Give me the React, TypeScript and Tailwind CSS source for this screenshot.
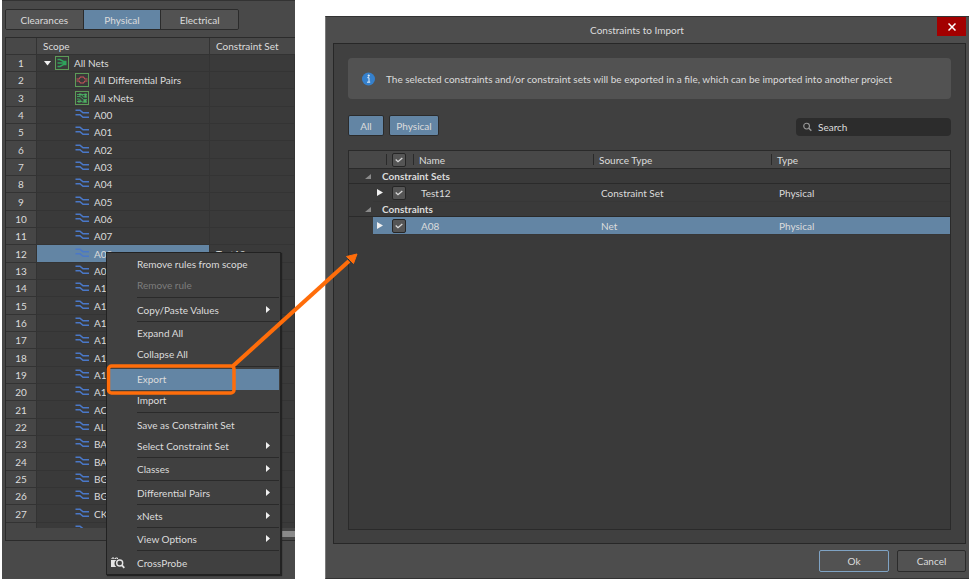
import React, { useState } from "react";
import clsx from "clsx";

const NETS = [
  "A00", "A01", "A02", "A03", "A04", "A05", "A06", "A07", "A08", "A09", "A10", "A11",
  "A12", "A13", "A14", "A15", "A16", "ACT", "ALERT", "BA0", "BA1", "BG0", "BG1", "CK", "CKE",
];

type MenuEntry = { label: string; submenu?: boolean; disabled?: boolean; active?: boolean; icon?: boolean };

const MENU: { gap: string; items: MenuEntry[] }[] = [
  { gap: "", items: [{ label: "Remove rules from scope" }, { label: "Remove rule", disabled: true }] },
  { gap: "mt-px mb-[2px]", items: [{ label: "Copy/Paste Values", submenu: true }] },
  { gap: "mb-px", items: [{ label: "Expand All" }, { label: "Collapse All" }] },
  { gap: "mt-px mb-[2px]", items: [{ label: "Export", active: true }, { label: "Import" }] },
  { gap: "mt-px mb-[2px]", items: [{ label: "Save as Constraint Set" }, { label: "Select Constraint Set", submenu: true }] },
  { gap: "mb-px", items: [{ label: "Classes", submenu: true }] },
  { gap: "mb-[2px]", items: [{ label: "Differential Pairs", submenu: true }] },
  { gap: "mb-px", items: [{ label: "xNets", submenu: true }] },
  { gap: "mb-px", items: [{ label: "View Options", submenu: true }] },
  { gap: "mb-[2px]", items: [{ label: "CrossProbe", icon: true }] },
];

function NetIcon() {
  return (
    <svg width="14" height="12" viewBox="0 0 14 12" fill="none" stroke="#4a78c8" strokeWidth="1.600" aria-hidden="true">
      <path d="M0.500 1.200H5L8 3.800H14M0.500 5.700H5L8 8.300H14" />
    </svg>
  );
}

function AllNetsIcon() {
  return (
    <svg width="14" height="14" viewBox="0 0 14 14" fill="none" aria-hidden="true">
      <rect x="0.5" y="0.5" width="13" height="13" stroke="#5d9c58" />
      <path d="M2.5 3.5H5L8.5 5.5H11.5M2.5 7H11.5M2.5 10.5H5L8.5 8.5H11.5" stroke="#2fa35c" strokeWidth="1.6" />
    </svg>
  );
}

function DiffPairsIcon() {
  return (
    <svg width="14" height="14" viewBox="0 0 14 14" fill="none" aria-hidden="true">
      <rect x="0.5" y="0.5" width="13" height="13" stroke="#5d9c58" />
      <path d="M1.500 6H4L5.500 4H8.500L10 6H12.500M1.500 8H4L5.500 10H8.500L10 8H12.500" stroke="#c9555a" strokeWidth="1.100" />
    </svg>
  );
}

function XNetsIcon() {
  return (
    <svg width="14" height="14" viewBox="0 0 14 14" fill="none" aria-hidden="true">
      <rect x="0.5" y="0.5" width="13" height="13" stroke="#5d9c58" />
      <path d="M2 3.500H12M2 5.500H5L8.500 8.500H12M2 8H4.500L7 11H12M2 10.500H6M6.500 3.500L8.500 6H12" stroke="#3fa35c" />
      <path d="M4 2.500H6.500V4.500H4ZM9.500 2.500H11.500V6.500H9.500ZM8.500 9H11.500V11.500H8.500ZM3 9.500H5.500V11.500H3Z" fill="#4fae62" />
    </svg>
  );
}

function CrossProbeIcon() {
  return (
    <svg width="14" height="12" viewBox="0 0 14 12" fill="none" className="ml-px" aria-hidden="true">
      <path d="M0 3H5.2A4.4 4.4 0 0 0 5.2 10H0Z" fill="#e4e4e4" />
      <path d="M1 2V1H3V2M4.5 2V1H6.5V2" stroke="#e4e4e4" />
      <circle cx="8.7" cy="6" r="3" stroke="#e4e4e4" strokeWidth="1.4" />
      <path d="M10.8 8.2L13.3 10.8" stroke="#e4e4e4" strokeWidth="1.8" />
    </svg>
  );
}

function Arrow({ small }: { small?: boolean }) {
  return (
    <svg width={small ? 4 : 6} height="7" viewBox="0 0 6 7" preserveAspectRatio="none" aria-hidden="true">
      <path d="M0 0L6 3.500L0 7Z" fill="#f0f0f0" />
    </svg>
  );
}

const gridNum = "border-r border-b border-[#333333] bg-[#464646] p-0 text-center font-normal";
const gridCell = "border-r border-b border-[#343434] p-0";

function ScopeRow({ n, indent, icon, label, open, selected, set }: {
  n: number; indent?: boolean; icon: React.ReactNode; label: string; open?: boolean; selected?: boolean; set?: string;
}) {
  return (
    <tr className="h-[17px] nth-[3n]:h-[18px]">
      <th scope="row" className={gridNum}>{n < 28 ? n : ""}</th>
      <td className={clsx(gridCell, selected && "bg-[#6385a4]")}>
        <div className={clsx("flex h-4 items-center", indent ? "pl-[38px]" : "pl-[7px]")}>
          {open && (
            <svg width="7" height="5" viewBox="0 0 7 5" className="mr-1" aria-hidden="true">
              <path d="M0 0H7L3.500 4.500Z" fill="#f0f0f0" />
            </svg>
          )}
          {icon}
          <span className="pl-[5px] leading-4">{label}</span>
        </div>
      </td>
      <td className={clsx(gridCell, "pl-[6px]")}>{set}</td>
    </tr>
  );
}

function ConstraintPanel() {
  const tabs = ["Clearances", "Physical", "Electrical"];
  const [tab, setTab] = useState("Physical");
  return (
    <section className="relative flex w-[293px] shrink-0 flex-col border-t border-[#333333] bg-[#494949] pt-2 pb-[38px] pl-[3px]">
      <div role="tablist" className="flex h-[21px] w-[234px] shrink-0 overflow-hidden rounded-xs border border-[#2b2b2b]">
        {tabs.map((t) => (
          <button
            key={t}
            role="tab"
            aria-selected={t === tab}
            onClick={() => setTab(t)}
            className={clsx(
              "flex-1 border-r border-[#2b2b2b] last:border-r-0",
              t === tab ? "bg-[#6385a4]" : "bg-[#525252]",
            )}
          >
            {t}
          </button>
        ))}
      </div>
      <div className="mt-[7px] min-h-0 flex-1 overflow-hidden border-t border-l border-[#2b2b2b] bg-[#3a3a3a]">
        <table className="w-full table-fixed border-separate border-spacing-0">
          <colgroup>
            <col className="w-[31px]" />
            <col className="w-[173px]" />
            <col />
          </colgroup>
          <thead>
            <tr className="h-[17px] bg-[#484848] text-left">
              <th aria-label="Row" className="border-r border-b border-[#333333] p-0" />
              <th className="border-r border-b border-[#333333] p-0 pl-[6px] font-normal">Scope</th>
              <th className="border-b border-[#333333] p-0 pl-[6px] font-normal">Constraint Set</th>
            </tr>
          </thead>
          <tbody>
            <ScopeRow n={1} icon={<AllNetsIcon />} label="All Nets" open />
            <ScopeRow n={2} indent icon={<DiffPairsIcon />} label="All Differential Pairs" />
            <ScopeRow n={3} indent icon={<XNetsIcon />} label="All xNets" />
            {NETS.map((net, i) => (
              <ScopeRow
                key={net}
                n={i + 4}
                indent
                icon={<NetIcon />}
                label={i + 4 < 28 ? net : ""}
                selected={net === "A08"}
                set={net === "A08" ? "Test12" : undefined}
              />
            ))}
          </tbody>
        </table>
      </div>
      <div className="flex h-[13px] shrink-0 items-center justify-end border-b border-l border-[#2b2b2b] bg-[#464646]">
        <div className="h-[6px] w-20 bg-[#8a8a8a]" />
      </div>
      <ContextMenu />
    </section>
  );
}

function ContextMenu() {
  return (
    <div role="menu" className="absolute top-[251px] left-[104px] w-[175px] border border-[#222222] bg-[#404040] pt-px pr-px pl-[3px] shadow-[1px_1px_1px_#222222]">
      {MENU.map(({ gap, items }, g) => (
        <div key={g}>
          {g > 0 && <div className={clsx("ml-[27px] border-t border-[#2a2a2a]", gap)} />}
          {items.map((m) => (
            <button
              key={m.label}
              role="menuitem"
              disabled={m.disabled}
              className={clsx(
                "flex h-[21px] w-full items-center pr-[9px] pb-[2px] text-left",
                m.active && "bg-[#6385a4]",
                m.disabled && "text-[#7d7d7d]",
              )}
            >
              <span className="w-[27px] shrink-0">{m.icon && <CrossProbeIcon />}</span>
              <span className="flex-1">{m.label}</span>
              {m.submenu && <Arrow small />}
            </button>
          ))}
        </div>
      ))}
    </div>
  );
}

function Check({ label }: { label: string }) {
  return (
    <label className="grid size-[14px] place-items-center">
      <input
        type="checkbox"
        defaultChecked
        aria-label={label}
        className="peer col-start-1 row-start-1 size-[14px] appearance-none rounded-xs border border-[#262626] bg-[#555555]"
      />
      <svg width="8" height="6" viewBox="0 0 8 6" fill="none" className="pointer-events-none invisible col-start-1 row-start-1 peer-checked:visible" aria-hidden="true">
        <path d="M0.700 2.500L3 4.700L7.300 0.900" stroke="#d8d8d8" strokeWidth="1.300" />
      </svg>
    </label>
  );
}

function HeadCell({ children }: { children: React.ReactNode }) {
  return (
    <th className="border-b border-[#2a2a2a] p-0 font-normal">
      <div className="flex h-[11px] items-center border-l border-[#2a2a2a] pl-[5px]">{children}</div>
    </th>
  );
}

function GroupRow({ label }: { label: string }) {
  return (
    <tr className="h-[15px]">
      <th colSpan={6} scope="rowgroup" className="border-b border-[#2a2a2a] p-0 text-left font-bold">
        <div className="flex h-[14px] items-center pl-4">
          <svg width="6" height="5" viewBox="0 0 6 5" className="mr-[11px]" aria-hidden="true">
            <path d="M6 0V5H0Z" fill="#8a8a8a" />
          </svg>
          {label}
        </div>
      </th>
    </tr>
  );
}

function ItemRow({ name, source, selected }: { name: string; source: string; selected?: boolean }) {
  const cell = clsx("border-b border-[#373737] p-0", selected && "bg-[#6385a4]");
  return (
    <tr className="h-[18px]">
      <td className="p-0" />
      <td className={clsx(cell, "pl-1")}><Arrow /></td>
      <td className={clsx(cell, "pl-[6px]")}><Check label={`Select ${name}`} /></td>
      <td className={clsx(cell, "pl-2")}>{name}</td>
      <td className={clsx(cell, "pl-2")}>{source}</td>
      <td className={clsx(cell, "pl-2")}>Physical</td>
    </tr>
  );
}

function ImportDialog() {
  return (
    <section role="dialog" aria-labelledby="dialog-title" className="mt-4 flex min-w-0 flex-1 flex-col border-t border-b border-l border-[#333333] border-l-[#7a7a7a] bg-[#4d4d4d] pr-[3px] pl-[7px]">
      <header className="flex h-[26px] shrink-0 items-start">
        <h1 id="dialog-title" className="flex-1 pl-1 text-center leading-[26px]">Constraints to Import</h1>
        <button aria-label="Close" className="grid h-[19px] w-[29px] place-items-center bg-[#a30000]">
          <svg width="8" height="8" viewBox="0 0 8 8" stroke="#ffffff" strokeWidth="1.500" aria-hidden="true">
            <path d="M0.500 0.500L7.500 7.500M7.500 0.500L0.500 7.500" />
          </svg>
        </button>
      </header>
      <div className="flex min-h-0 flex-1 flex-col border border-[#272727] bg-[#404040] px-[14px] pt-[14px] pb-[13px]">
        <p className="flex h-[41px] shrink-0 items-center gap-[11px] rounded-sm bg-[#525252] pl-[14px]">
          <svg width="13" height="14" viewBox="0 0 13 14" aria-hidden="true">
            <circle cx="6.500" cy="7" r="6.500" fill="#3580cc" />
            <path d="M5.300 5.700H7V10M5 10.200H8.200M6.200 3H7.200V4.200H6.200Z" stroke="#e8f0f8" fill="none" />
          </svg>
          <span>The selected constraints and/or constraint sets will be exported in a file, which can be imported into another project</span>
        </p>
        <div className="mt-4 flex h-[21px] shrink-0 gap-[5px]">
          <button className="w-9 rounded-xs border border-[#2b2b2b] bg-[#6385a4]">All</button>
          <button className="w-[50px] rounded-xs border border-[#2b2b2b] bg-[#6385a4]">Physical</button>
          <label className="mt-[3px] ml-auto flex h-[18px] w-[155px] items-center gap-[6px] rounded-sm bg-[#2c2c2c] pl-[7px]">
            <svg width="10" height="10" viewBox="0 0 10 10" fill="none" stroke="#969696" aria-hidden="true">
              <circle cx="4" cy="4" r="3.200" strokeWidth="1.300" />
              <path d="M6.500 6.500L9.300 9.300" strokeWidth="1.600" />
            </svg>
            <input type="search" aria-label="Search" placeholder="Search" className="w-full min-w-0 bg-transparent outline-none placeholder:text-[#dcdcdc]" />
          </label>
        </div>
        <div className="mt-[14px] min-h-0 flex-1 overflow-hidden border border-[#2a2a2a] bg-[#3a3a3a]">
          <table className="w-full table-fixed border-separate border-spacing-0 text-left">
            <colgroup>
              <col className="w-6" />
              <col className="w-[13px]" />
              <col className="w-[27px]" />
              <col className="w-[180px]" />
              <col className="w-[178px]" />
              <col />
            </colgroup>
            <thead>
              <tr className="h-[18px] bg-[#484848]">
                <th colSpan={2} aria-label="Expand" className="border-b border-[#2a2a2a] p-0" />
                <HeadCell><Check label="Select all" /></HeadCell>
                <HeadCell>Name</HeadCell>
                <HeadCell>Source Type</HeadCell>
                <HeadCell>Type</HeadCell>
              </tr>
            </thead>
            <tbody>
              <GroupRow label="Constraint Sets" />
              <ItemRow name="Test12" source="Constraint Set" />
              <GroupRow label="Constraints" />
              <ItemRow name="A08" source="Net" selected />
            </tbody>
          </table>
        </div>
      </div>
      <footer className="flex h-[34px] shrink-0 items-center justify-end gap-2">
        <button className="h-[22px] w-[70px] rounded-xs border border-[#7fa3c4] bg-[#525252]">Ok</button>
        <button className="h-[22px] w-[69px] rounded-xs border border-[#2b2b2b] bg-[#525252]">Cancel</button>
      </footer>
    </section>
  );
}

export default function App() {
  return (
    <main className="relative flex h-screen gap-[30px] overflow-hidden bg-white pl-[2px] font-['Lato',sans-serif] text-[10px] leading-[14px] text-[#dcdcdc]">
      <ConstraintPanel />
      <ImportDialog />
      <svg width="360" height="400" viewBox="0 0 360 400" fill="none" stroke="#ff6d0a" className="pointer-events-none absolute top-0 left-0" aria-hidden="true">
        <rect x="108.500" y="366" width="125.500" height="27" rx="3" strokeWidth="3.500" />
        <path d="M233 366L349 261" strokeWidth="4" />
        <path d="M357 254L346.500 256.500L353.500 263.500Z" fill="#ff6d0a" strokeWidth="1" />
      </svg>
    </main>
  );
}
